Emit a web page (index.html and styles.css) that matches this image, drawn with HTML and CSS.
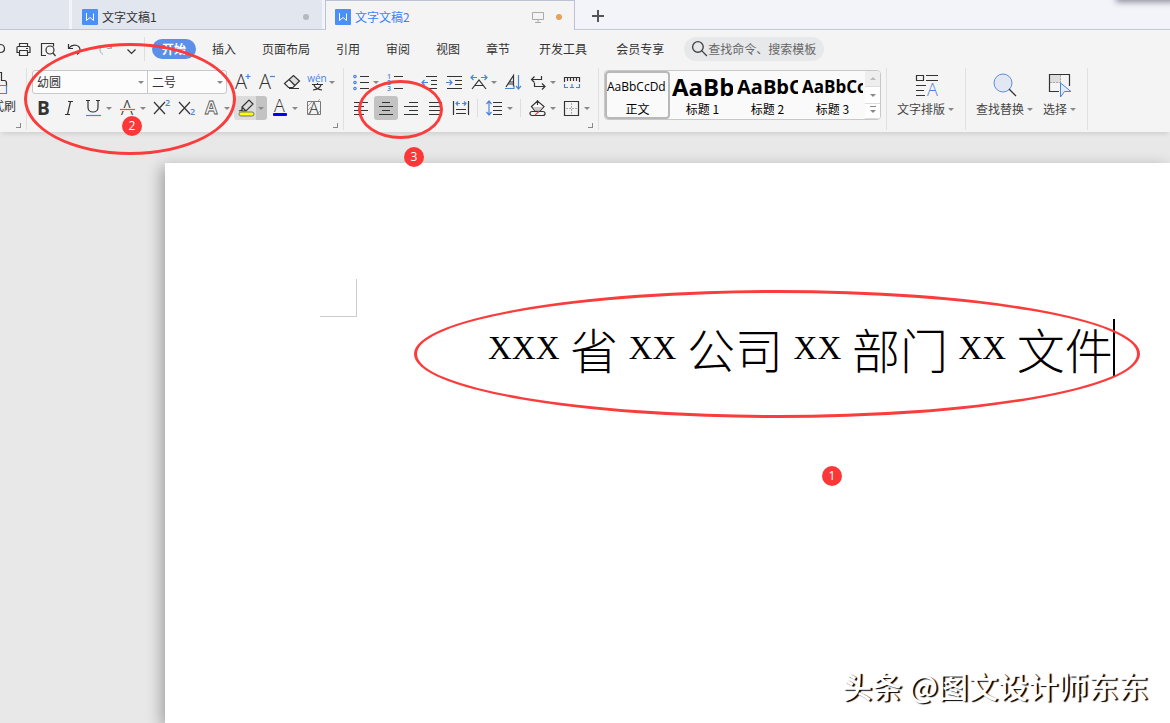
FILE: index.html
```html
<!DOCTYPE html>
<html lang="zh-CN">
<head>
<meta charset="utf-8">
<title>文字文稿2</title>
<meta name="viewport" content="width=device-width, initial-scale=1">
<link rel="stylesheet" href="styles.css">
</head>
<body>
<div class="app">
  <header class="tabs">
    <div class="tab tab-stub"></div>
    <div class="tab">
      <svg class="logo" viewBox="0 0 16 16"><rect width="16" height="16" rx="1"/><path d="M4.500 4v7.500L8 8.500l3.500 3V4.500"/></svg>
      <span class="tab-name">文字文稿1</span>
      <i class="dot"></i>
    </div>
    <div class="tab tab-active">
      <svg class="logo" viewBox="0 0 16 16"><rect width="16" height="16" rx="1"/><path d="M4.500 4v7.500L8 8.500l3.500 3V4.500"/></svg>
      <span class="tab-name">文字文稿2</span>
      <svg class="monitor" viewBox="0 0 12 12"><path d="M.5 1.500h11v7H.5zM6 8.500v3M3 11.500h6"/></svg>
      <i class="dot dot-orange"></i>
    </div>
    <button class="new-tab" aria-label="新建"><svg viewBox="0 0 14 14"><path d="M7 1v12M1 7h12"/></svg></button>
    <div class="float-shadow"></div>
  </header>

  <div class="menu">
    <div class="quick">
      <button class="tool cut-off" aria-label="输出"><svg viewBox="0 0 10 24"><path class="k" d="M0 7.500c6 0 6 8 0 8"/></svg></button>
      <button class="tool" aria-label="打印"><svg viewBox="0 0 24 24"><path class="k" d="M8.500 9.500v-3h8v3M8.500 15.500h-2.500v-5q0-1 1-1h11q1 0 1 1v5h-2.500M8.500 13.500h8v5h-8zM15 11.500h2"/></svg></button>
      <button class="tool" aria-label="打印预览"><svg viewBox="0 0 24 24"><path class="k" d="M10 18.500H5.500v-12h12v3M17 16l2.500 3"/><circle class="k" cx="14" cy="13" r="4"/></svg></button>
      <button class="tool" aria-label="撤销"><svg viewBox="0 0 24 24"><path class="k" d="M7.500 7v4.500H12M8 11c4-5 11-3 11 2 0 2-1 3-3 4.500"/></svg></button>
      <button class="tool redo" aria-label="恢复"><svg viewBox="0 0 24 24"><path class="g" d="M17.500 7v4.500H13M17 11c-4-5-11-3-11 2 0 2 1 3 3 4.500"/></svg></button>
      <button class="tool" aria-label="更多"><svg viewBox="0 0 24 24"><path class="k" d="M8.500 12.500l4 4 4-4M9 8.500h7"/></svg></button>
      <span class="rule"></span>
    </div>
    <nav class="nav">
      <a class="on" href="#">开始</a><a href="#">插入</a><a href="#">页面布局</a><a href="#">引用</a><a href="#">审阅</a><a href="#">视图</a><a href="#">章节</a>
    </nav>
    <nav class="nav nav-extra"><a href="#">开发工具</a><a href="#">会员专享</a></nav>
    <label class="search">
      <svg viewBox="0 0 16 16"><circle cx="6.500" cy="6.500" r="5"/><path d="M10 10l5 5"/></svg>
      <input type="text" placeholder="查找命令、搜索模板" aria-label="查找命令、搜索模板">
    </label>
  </div>

  <div class="ribbon">
    <section class="group clip">
      <svg class="brush" viewBox="0 0 8 26"><path class="k" d="M0 2.500h1.500v8h3q2 0 2 3v3"/><path class="b" d="M0 15.500h6.500v8H0"/></svg>
      <span class="clip-name">格式刷</span>
      <i class="launcher"></i>
    </section>

    <section class="group font">
      <div class="row">
        <div class="picks">
          <span class="pick pick-font"><select aria-label="字体"><option>幼圆</option></select><i class="caret"></i></span>
          <span class="pick pick-size"><select aria-label="字号"><option>二号</option></select><i class="caret"></i></span>
        </div>
        <button class="tool" aria-label="增大字号"><svg viewBox="0 0 24 24"><text class="thin" x="5" y="19" font-size="20">A</text><path class="b" d="M15.500 6.500h5M18 4v5"/></svg></button>
        <button class="tool" aria-label="减小字号"><svg viewBox="0 0 24 24"><text class="thin" x="4" y="19" font-size="20">A</text><path class="b" d="M15 6.500h5"/></svg></button>
        <button class="tool" aria-label="清除格式"><svg viewBox="0 0 24 24"><path fill="#ddd" d="M9.500 9.500L14 5.500l5.500 5.500-5.500 6z"/><path class="k" d="M4.500 13.500L13.500 5.500l6 5.500-6.500 6.500H8.500zM9 9.500l6 6M9 18.500h10"/></svg></button>
        <button class="tool with-caret" aria-label="拼音指南"><svg viewBox="0 0 24 24"><text class="pinyin" x="12" y="12" text-anchor="middle" font-size="10">wén</text><path class="k" d="M7 14.500h11M12.500 13v2M9 15c1 3 4 4.500 8 5M16 15c-1 3-4 4.500-8 5"/></svg><i class="caret"></i></button>
      </div>
      <div class="row">
        <button class="tool" aria-label="加粗"><svg viewBox="0 0 24 24"><text class="bold" x="5" y="19" font-size="19">B</text></svg></button>
        <button class="tool" aria-label="倾斜"><svg viewBox="0 0 24 24"><path class="k" d="M11 5.500h5M8 18.500h5M13.500 5.500l-3 13"/></svg></button>
        <button class="tool with-caret" aria-label="下划线"><svg viewBox="0 0 24 24"><path class="k" d="M4 4.500h4M14 4.500h4M6 4.500v7c0 6 10 6 10 0v-7"/><path class="b" d="M4 19.500h15"/></svg><i class="caret"></i></button>
        <button class="tool with-caret" aria-label="删除线"><svg viewBox="0 0 24 24"><text class="thin" x="5" y="19" font-size="20">A</text><path class="gap" d="M3 13.500h17"/><path class="r" d="M4 13.500h15"/></svg><i class="caret"></i></button>
        <button class="tool" aria-label="上标"><svg viewBox="0 0 24 24"><path class="k" d="M4 6l11 12M15 6L4 18"/><text class="blue" x="15" y="10" font-size="9">2</text></svg></button>
        <button class="tool" aria-label="下标"><svg viewBox="0 0 24 24"><path class="k" d="M4 6l11 12M15 6L4 18"/><text class="blue" x="15" y="19" font-size="9">2</text></svg></button>
        <button class="tool with-caret" aria-label="文字效果"><svg viewBox="0 0 24 24"><text class="outline" x="5" y="18" font-size="18">A</text></svg><i class="caret"></i></button>
        <button class="tool with-caret marker" aria-label="突出显示"><svg viewBox="0 0 24 24"><path class="k" d="M8 11l7-7 4 4-7 7H8zM8 11l4 4M8 14l-3 1"/><rect x="5" y="16" width="15" height="4" rx="2" fill="#ff0" stroke="#777"/></svg><i class="caret"></i></button>
        <button class="tool with-caret" aria-label="字体颜色"><svg viewBox="0 0 24 24"><text class="thin" x="6" y="16" font-size="18">A</text><rect x="5" y="17" width="14" height="3" rx="1" fill="#00f"/></svg><i class="caret"></i></button>
        <button class="tool" aria-label="字符底纹"><svg viewBox="0 0 24 24"><path class="g" d="M6 10l4-4M6 14l3-3M15 6l3-3M6 18l3-3M15 18l3-3"/><path class="frame" d="M5.500 5.500h13v13h-13z"/><text class="thin" x="7" y="18" font-size="16">A</text></svg></button>
      </div>
      <i class="launcher"></i>
    </section>

    <section class="group para">
      <div class="row">
        <button class="tool with-caret" aria-label="项目符号"><svg viewBox="0 0 24 24"><path class="k" d="M11 6.500h9M11 12.500h9M11 18.500h9"/><g class="b"><circle cx="6" cy="6.500" r="1.200"/><circle cx="6" cy="12.500" r="1.200"/><circle cx="6" cy="18.500" r="1.200"/></g></svg><i class="caret"></i></button>
        <button class="tool with-caret" aria-label="编号"><svg viewBox="0 0 24 24"><path class="k" d="M11 6.500h9M11 12.500h9M11 18.500h9"/><g class="blue" font-size="7"><text x="4" y="9">1</text><text x="4" y="15">2</text><text x="4" y="21">3</text></g></svg><i class="caret"></i></button>
        <button class="tool" aria-label="减少缩进"><svg viewBox="0 0 24 24"><path class="k" d="M9 6.500h11M14 10.500h6M14 14.500h6M9 18.500h11"/><path class="b" d="M11 12.500H5M7.500 10L5 12.500 7.500 15"/></svg></button>
        <button class="tool" aria-label="增加缩进"><svg viewBox="0 0 24 24"><path class="k" d="M5 6.500h15M13 10.500h7M13 14.500h7M5 18.500h15"/><path class="b" d="M4 12.500h6M7.500 10l2.500 2.500L7.500 15"/></svg></button>
        <button class="tool with-caret" aria-label="中文版式"><svg viewBox="0 0 24 24"><path class="k" d="M5 19l7-9 7 9M8 15.500h8"/><path class="b" d="M4 7.500h6M6.500 5L4 7.500 6.500 10M14 7.500h6M17.500 5L20 7.500 17.500 10"/></svg><i class="caret"></i></button>
        <button class="tool" aria-label="排序"><svg viewBox="0 0 24 24"><path class="k" d="M5 17L12.500 5.500v11M8 12h4.500M7 14h5.500"/><path class="b" d="M4 18.500h9v-3M17.500 5v14M15 16l2.500 3 2.500-3"/></svg></button>
        <button class="tool with-caret" aria-label="换行"><svg viewBox="0 0 24 24"><path class="k" d="M15.500 6v3.500H6M8.500 6.500L5.500 9.500l3 3M8.500 13v3.500H19M16 13.500l3 3-3 3"/></svg><i class="caret"></i></button>
        <button class="tool" aria-label="标尺"><svg viewBox="0 0 24 24"><path class="k" d="M4.500 12V7.500h15V12M7.500 8v3M10.500 8v3M13.500 8v3M16.500 8v3"/><path class="b" d="M4.500 14v3.500H8M10 17.500h4M12 14v3M16 17.500h3.500V14"/></svg></button>
      </div>
      <div class="row">
        <button class="tool" aria-label="左对齐"><svg viewBox="0 0 24 24"><path class="k" d="M5 6.500h14M5 10.500h10M5 14.500h14M5 18.500h10"/></svg></button>
        <button class="tool pressed" aria-label="居中对齐"><svg viewBox="0 0 24 24"><path class="k" d="M8 6.500h8M5 10.500h14M8 14.500h8M5 18.500h14"/></svg></button>
        <button class="tool" aria-label="右对齐"><svg viewBox="0 0 24 24"><path class="k" d="M10 6.500h9M5 10.500h14M10 14.500h9M5 18.500h14"/></svg></button>
        <button class="tool" aria-label="两端对齐"><svg viewBox="0 0 24 24"><path class="k" d="M5 6.500h13M5 10.500h13M5 14.500h13M5 18.500h13"/></svg></button>
        <button class="tool" aria-label="分散对齐"><svg viewBox="0 0 24 24"><path class="k" d="M4.500 5v14M19.500 5v14M7 13.500h10M7 17.500h10"/><path class="b" d="M7 7.500h4M9 5.500l-2 2 2 2M13 7.500h4M15 5.500l2 2-2 2"/></svg></button>
        <span class="row-rule"></span>
        <button class="tool with-caret" aria-label="行距"><svg viewBox="0 0 24 24"><path class="k" d="M10 6.500h9M10 10.500h9M10 14.500h9M10 18.500h9"/><path class="b" d="M6 5v14M3.500 8L6 5l2.500 3M3.500 16L6 19l2.500-3"/></svg><i class="caret"></i></button>
        <span class="row-rule"></span>
        <button class="tool with-caret" aria-label="底纹颜色"><svg viewBox="0 0 24 24"><path class="k" fill="#fff" d="M5.500 10.500L11.500 5l6.500 5.500-4 4.500H9zM11.500 4v5"/><path fill="#ccc" d="M7 11h10l-3 3.500H9z"/><rect class="k" x="4" y="15.500" width="15" height="4" rx="2"/><path class="r" d="M9 19l4-3.500"/></svg><i class="caret"></i></button>
        <button class="tool with-caret" aria-label="边框"><svg viewBox="0 0 24 24"><path class="k" d="M4.500 5.500h14v14h-14z"/><path class="g" stroke-dasharray="2 1" d="M11.500 7v11M6 12.500h11"/></svg><i class="caret"></i></button>
      </div>
      <i class="launcher"></i>
    </section>

    <section class="group styles">
      <div class="gallery">
        <button class="style chosen"><span class="sample">AaBbCcDd</span><span>正文</span></button>
        <button class="style"><span class="sample h1">AaBb</span><span>标题 1</span></button>
        <button class="style"><span class="sample h2">AaBbC</span><span>标题 2</span></button>
        <button class="style"><span class="sample h3">AaBbCc</span><span>标题 3</span></button>
        <div class="scroller">
          <button aria-label="上一行"><i class="caret up"></i></button>
          <button aria-label="下一行"><i class="caret"></i></button>
          <button aria-label="更多样式"><i class="caret more"></i></button>
        </div>
      </div>
    </section>

    <section class="group big-tools">
      <button class="big"><svg viewBox="0 0 26 26"><path class="k" d="M3.500 3.500h7v5h-7zM13 3.500h12M13 8.500h12M3 13.500h10M3 18.500h8M3 23.500h9"/><text class="blue-light" x="14" y="24" font-size="18">A</text></svg><span>文字排版<i class="caret"></i></span></button>
    </section>
    <section class="group big-tools">
      <button class="big"><svg viewBox="0 0 26 26"><circle cx="11" cy="11" r="9" fill="#e2e8f3" stroke="#5b8fdd"/><path class="k" d="M17 17l7 7"/></svg><span>查找替换<i class="caret"></i></span></button>
      <button class="big"><svg viewBox="0 0 26 26"><path fill="#ddd" d="M3 3h11v8H3z"/><path class="g" stroke-dasharray="2 1" d="M13.500 3v9M3 10.500h10"/><path class="k" d="M12 19.500H2.500v-17h20V14"/><path fill="#e2ebf8" stroke="#4a86d8" d="M13.500 11v14l4-5.500H24z"/></svg><span>选择<i class="caret"></i></span></button>
    </section>
  </div>

  <main class="workspace">
    <article class="page">
      <div class="margin-mark"></div>
      <h1 class="title"><span class="x">XXX</span> 省 <span class="x">XX</span> 公司 <span class="x">XX</span> 部门 <span class="x">XX</span> 文件<i class="cursor"></i></h1>
    </article>
  </main>

  <div class="ring ring-font"></div>
  <div class="ring ring-align"></div>
  <div class="ring ring-title"></div>
  <span class="badge badge-1">1</span>
  <span class="badge badge-2">2</span>
  <span class="badge badge-3">3</span>
  <div class="signature">头条 @图文设计师东东</div>
</div>
</body>
</html>
```
FILE: styles.css
```css
* { box-sizing: border-box; }
body {
  margin: 0;
  font: 12px/16px "Noto Sans CJK SC", sans-serif;
  color: #333;
}
button, select, input { font: inherit; color: inherit; }
button { padding: 0; border: 0; background: none; }
a { color: inherit; text-decoration: none; }
svg { display: block; fill: none; overflow: visible; }

.app {
  position: relative;
  display: flex;
  flex-direction: column;
  min-height: 100vh;
  overflow: hidden;
  background: #f4f4f4;
}

/* document tabs */
.tabs {
  position: relative;
  display: flex;
  gap: 3px;
  height: 30px;
  background: #f2f4f9;
  box-shadow: inset 0 -1px #c5cadb;
}
.tab {
  display: flex;
  align-items: center;
  width: 250px;
  padding: 4px 13px 0 10px;
  background: #e2e6ef;
  border-bottom: 1px solid #c0c6d6;
}
.tab-stub { width: 69px; padding: 0; }
.tab-active {
  background: #f4f4f4;
  border: 1px solid #bcc2d4;
  border-bottom: 0;
  padding: 2px 12px 0 9px;
  color: #417ff9;
}
.logo { width: 16px; height: 16px; margin-right: 4px; }
.logo rect { fill: #4c8ff5; }
.logo path { stroke: #fff; }
.tab-name { flex: 1; }
.dot { width: 6px; height: 6px; border-radius: 50%; background: #b5b8c0; }
.dot-orange { background: #e8a05a; margin-left: 12px; }
.monitor { width: 12px; height: 12px; stroke: #aaa; }
.new-tab { padding: 2px 13px 0; }
.new-tab svg { width: 14px; height: 14px; stroke: #555; stroke-width: 2; }
.float-shadow {
  position: absolute;
  top: -4px;
  right: -4px;
  width: 56px;
  height: 4px;
  box-shadow: 0 0 6px 2px #889;
}

/* menu bar */
.menu { display: flex; align-items: center; height: 37px; }
.quick { display: flex; align-items: center; gap: 1px; width: 152px; }
.redo { margin-left: 8px; }
.rule { width: 1px; height: 24px; background: #ddd; }
.nav { display: flex; align-items: center; gap: 26px; }
.nav .on {
  margin-right: -10px;
  padding: 2px 10px;
  border-radius: 10px;
  background: #5b8fe8;
  color: #fff;
  font-weight: bold;
}
.nav-extra { gap: 29px; margin-left: 29px; }
.search {
  display: flex;
  align-items: center;
  width: 140px;
  height: 24px;
  margin-left: 20px;
  padding: 0 7px;
  border-radius: 12px;
  background: #e6e8ea;
}
.search svg { flex: none; width: 17px; height: 17px; stroke: #444; stroke-width: 1.3; }
.search input { flex: 1; min-width: 0; padding: 0; border: 0; background: none; }
.search input::placeholder { color: #666; opacity: 1; }

/* ribbon */
.ribbon {
  position: relative;
  z-index: 1;
  display: flex;
  height: 65px;
  box-shadow: 0 4px 4px -2px #d0d0d0;
  background: #f4f4f4;
}
.group {
  position: relative;
  display: flex;
  flex-direction: column;
  gap: 2px;
  flex: none;
  padding: 3px 5px 0;
}
.group::after {
  content: "";
  position: absolute;
  top: 1px;
  right: 0;
  width: 1px;
  height: 62px;
  background: #e0e0e0;
}
.clip { width: 27px; padding: 3px 0 0; align-items: flex-start; }
.brush { width: 8px; height: 26px; }
.clip-name { display: flex; justify-content: flex-end; width: 16px; white-space: nowrap; overflow: hidden; }
.font { width: 317px; }
.para { width: 255px; }
.launcher {
  position: absolute;
  right: 6px;
  bottom: 4px;
  width: 5px;
  height: 5px;
  border: solid #888;
  border-width: 0 1px 1px 0;
}
.row { display: flex; gap: 1px; height: 24px; }
.row-rule { width: 1px; height: 18px; margin: 3px 4px 3px 3px; background: #ddd; }
.tool { display: flex; align-items: center; flex: none; width: 24px; height: 24px; border-radius: 3px; }
.with-caret { width: 33px; }
.tool svg { flex: none; width: 24px; height: 24px; }
.tool.cut-off, .tool.cut-off svg { width: 10px; }
.pressed { background: #c3c3c3; }
.marker { background: linear-gradient(90deg, #dcdcdc 22px, #c3c3c3 22px); }
.caret {
  display: inline-block;
  flex: none;
  border: 3px solid transparent;
  border-top-color: #888;
  border-bottom: 0;
}
.picks { display: flex; width: 195px; height: 24px; margin-right: 2px; border: 1px solid #c8c8c8; border-radius: 3px; background: #fcfcfc; }
.pick { display: flex; align-items: center; padding-right: 3px; }
.pick-font { flex: 1; border-right: 1px solid #c8c8c8; }
.pick-size { width: 78px; }
.pick select { flex: 1; min-width: 0; padding: 0 0 0 4px; border: 0; background: none; appearance: none; }

/* icon strokes and letters */
.k { stroke: #333; stroke-width: 1.2; }
.b { stroke: #4a86d8; stroke-width: 1.2; }
.g { stroke: #aaa; }
.frame { stroke: #777; }
.r { stroke: #e05050; stroke-width: 1.2; }
.gap { stroke: #f4f4f4; stroke-width: 3; }
.thin { fill: #333; font-family: "Open Sans", sans-serif; font-weight: 300; }
.bold { fill: #333; font-family: "Open Sans", sans-serif; font-weight: bold; }
.outline { fill: #f4f4f4; stroke: #555; stroke-width: 0.8; font-family: "Open Sans", sans-serif; font-weight: bold; }
.blue, .pinyin { fill: #4a86d8; font-family: "Open Sans", sans-serif; font-weight: 600; }
.pinyin { font-weight: 400; }
.blue-light { fill: #4a86d8; font-family: "Open Sans", sans-serif; font-weight: 300; }

/* style gallery */
.styles { width: 288px; padding: 3px 6px 0 5px; }
.gallery { display: flex; height: 50px; border: 1px solid #c8c8c8; border-radius: 4px; background: #fafafa; color: #000; overflow: hidden; }
.style {
  display: flex;
  flex-direction: column;
  align-items: center;
  flex: none;
  width: 65px;
  padding: 2px 2px 0;
}
.style.chosen { border: 2px solid #b8b8b8; border-radius: 4px; padding: 0; }
.sample {
  align-self: stretch;
  height: 28px;
  line-height: 28px;
  font-family: "Open Sans", sans-serif;
  text-align: left;
  white-space: nowrap;
  overflow: hidden;
}
.h1, .h2, .h3 { font-weight: bold; }
.h1 { font-size: 24px; }
.h2 { font-size: 20px; }
.h3 { font-size: 17px; }
.scroller { flex: 1; display: grid; grid-template-rows: 16px 17px 15px; background: #fff; }
.scroller button { display: grid; place-items: center; border-bottom: 1px solid #ddd; }
.scroller button:first-child { background: #eee; }
.up { transform: rotate(180deg); opacity: 0.5; }
.more { position: relative; }
.more::before { content: ""; position: absolute; top: -7px; left: -3px; width: 6px; height: 1px; background: #888; }

/* large buttons */
.big-tools { flex-direction: row; gap: 10px; padding: 3px 12px 0 10px; }
.big { display: flex; flex-direction: column; align-items: center; gap: 3px; padding-top: 2px; height: 48px; }
.big svg { width: 26px; height: 26px; }
.big span { display: flex; align-items: center; gap: 3px; color: #444; }

/* document */
.workspace { flex: 1; display: flex; padding: 31px 0 0 165px; background: #e8e8e8; }
.page {
  flex: 1;
  min-width: 0;
  padding-top: 116px;
  background: #fff;
  box-shadow: -4px 4px 14px rgba(0, 0, 0, 0.3);
}
.margin-mark { width: 37px; height: 38px; margin-left: 155px; border: solid #ccc; border-width: 0 1px 1px 0; }
.title {
  display: flex;
  align-items: center;
  height: 58px;
  margin: 2px 0 0;
  padding-left: 323px;
  font-size: 48px;
  font-weight: 200;
  line-height: 58px;
  color: #000;
  white-space: pre;
}
.x { font-family: "Liberation Serif", serif; font-size: 33px; }
.cursor { width: 2px; height: 58px; background: #000; }

/* markup drawn over the window */
.ring { position: absolute; z-index: 2; border: 3px solid #fa3c3c; border-radius: 50%; pointer-events: none; }
.ring-font { left: 24px; top: 43px; width: 212px; height: 112px; }
.ring-align { left: 358px; top: 80px; width: 85px; height: 59px; }
.ring-title { left: 414px; top: 290px; width: 726px; height: 128px; }
.badge {
  position: absolute;
  z-index: 2;
  width: 20px;
  height: 20px;
  border-radius: 50%;
  background: #fa3838;
  color: #fff;
  font-family: "Open Sans", sans-serif;
  line-height: 20px;
  text-align: center;
}
.badge-1 { left: 822px; top: 466px; }
.badge-2 { left: 122px; top: 116px; }
.badge-3 { left: 404px; top: 147px; }
.signature {
  position: absolute;
  right: 22px;
  bottom: 18px;
  font-size: 30px;
  line-height: 40px;
  font-weight: 500;
  color: #fff;
  text-shadow: 2px 1px 1px #000;
  white-space: nowrap;
}
```
